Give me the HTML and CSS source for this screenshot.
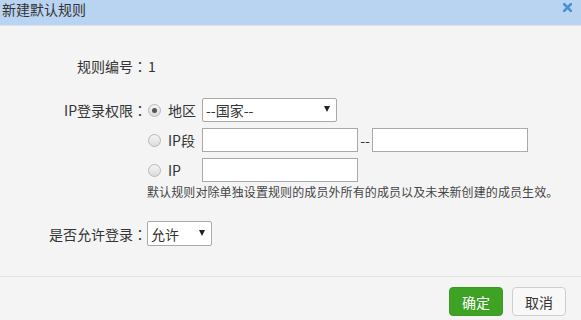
FILE: index.html
```html
<!DOCTYPE html>
<html>
<head>
<meta charset="utf-8">
<link rel="stylesheet" href="styles.css">
</head>
<body>
<div class="dialog">
  <div class="header">
    <span class="title">新建默认规则</span>
    <span class="close"><svg width="9" height="9" viewBox="0 0 9 9"><path d="M1 1L8 8M8 1L1 8" stroke="#4a8fd8" stroke-width="2.6" stroke-linecap="square"/></svg></span>
  </div>
  <div class="body">
    <div class="row r1">
      <div class="label">规则编号<span class="colon">：</span></div>
      <div class="value">1</div>
    </div>
    <div class="row r2">
      <div class="label">IP登录权限<span class="colon">：</span></div>
      <div class="options">
        <div class="opt">
          <span class="radio on"></span><span class="optlabel">地区</span>
          <div class="select wide"><span>--国家--</span><span class="arrow"></span></div>
        </div>
        <div class="opt">
          <span class="radio"></span><span class="optlabel">IP段</span>
          <div class="input"></div><span class="dash">--</span><div class="input"></div>
        </div>
        <div class="opt">
          <span class="radio"></span><span class="optlabel">IP</span>
          <div class="input"></div>
        </div>
        <div class="help">默认规则对除单独设置规则的成员外所有的成员以及未来新创建的成员生效。</div>
      </div>
    </div>
    <div class="row r3">
      <div class="label">是否允许登录<span class="colon">：</span></div>
      <div class="select narrow"><span>允许</span><span class="arrow"></span></div>
    </div>
  </div>
  <div class="footer">
    <button class="btn ok">确定</button>
    <button class="btn cancel">取消</button>
  </div>
</div>
</body>
</html>
```
FILE: styles.css
```css
html, body {
  margin: 0;
  padding: 0;
  background: #f4f4f4;
  font-family: "Noto Sans CJK SC", "Microsoft YaHei", sans-serif;
  color: #333;
  font-size: 14px;
}
.dialog {
  width: 581px;
  height: 320px;
  display: flex;
  flex-direction: column;
}
.header {
  height: 25px;
  background: #b9d4f1;
  border-bottom: 1px solid #d8e3ef;
  display: flex;
  justify-content: space-between;
  align-items: flex-start;
  flex: none;
}
.title {
  line-height: 18px;
  margin-left: 2px;
  color: #333;
}
.close {
  margin-top: 3px;
  margin-right: 9px;
  display: flex;
}
.body {
  flex: 1;
  padding-top: 30px;
}
.row {
  display: flex;
  align-items: flex-start;
}
.label {
  width: 147px;
  text-align: right;
  line-height: 20px;
  flex: none;
}
.colon {
  font-family: "Noto Sans CJK TC", "Noto Sans CJK SC", sans-serif;
}
.value {
  line-height: 20px;
  margin-left: 1px;
}
.r2 {
  margin-top: 22px;
}
.r2 > .label {
  line-height: 24px;
}
.options {
  display: flex;
  flex-direction: column;
}
.opt {
  display: flex;
  align-items: center;
  height: 24px;
  margin-bottom: 6px;
}
.opt:nth-child(3) {
  margin-bottom: 2px;
}
.radio {
  width: 11px;
  height: 11px;
  border: 1px solid #b8b8b8;
  border-radius: 50%;
  background: linear-gradient(#f4f4f4, #dcdcdc);
  margin-left: 1px;
  position: relative;
  flex: none;
}
.radio.on::after {
  content: "";
  position: absolute;
  left: 3px;
  top: 3px;
  width: 5px;
  height: 5px;
  border-radius: 50%;
  background: #555;
}
.optlabel {
  width: 34px;
  margin-left: 7px;
  line-height: 24px;
}
.select {
  box-sizing: border-box;
  height: 24px;
  border: 1px solid #a9a9a9;
  border-radius: 2px;
  background: #fff;
  display: flex;
  align-items: center;
  justify-content: space-between;
  padding: 0 6px 0 3px;
}
.select .arrow {
  width: 0;
  height: 0;
  border-left: 3px solid transparent;
  border-right: 3px solid transparent;
  border-top: 6px solid #222;
  margin-top: -2px;
}
.select.wide {
  width: 135px;
}
.select.narrow {
  width: 65px;
  height: 25px;
  margin-top: -3px;
}
.input {
  box-sizing: border-box;
  width: 156px;
  height: 24px;
  border: 1px solid #a9a9a9;
  background: #fff;
}
.dash {
  width: 14px;
  text-align: center;
  line-height: 24px;
  letter-spacing: 0;
}
.help {
  font-size: 12px;
  line-height: 16px;
  white-space: nowrap;
  color: #444;
  letter-spacing: 0.1px;
}
.r3 {
  margin-top: 24px;
}
.footer {
  height: 44px;
  border-top: 1px solid #e2e2e2;
  display: flex;
  justify-content: flex-end;
  align-items: flex-start;
  padding-top: 10px;
  padding-right: 15px;
  box-sizing: border-box;
  flex: none;
  gap: 9px;
}
.btn {
  width: 54px;
  height: 29px;
  border-radius: 4px;
  font-family: inherit;
  font-size: 14px;
  padding: 0;
}
.ok {
  background: #3ea225;
  border: 1px solid #3a9a22;
  color: #fff;
}
.cancel {
  background: #f8f8f8;
  border: 1px solid #cfcfcf;
  color: #333;
}
```
